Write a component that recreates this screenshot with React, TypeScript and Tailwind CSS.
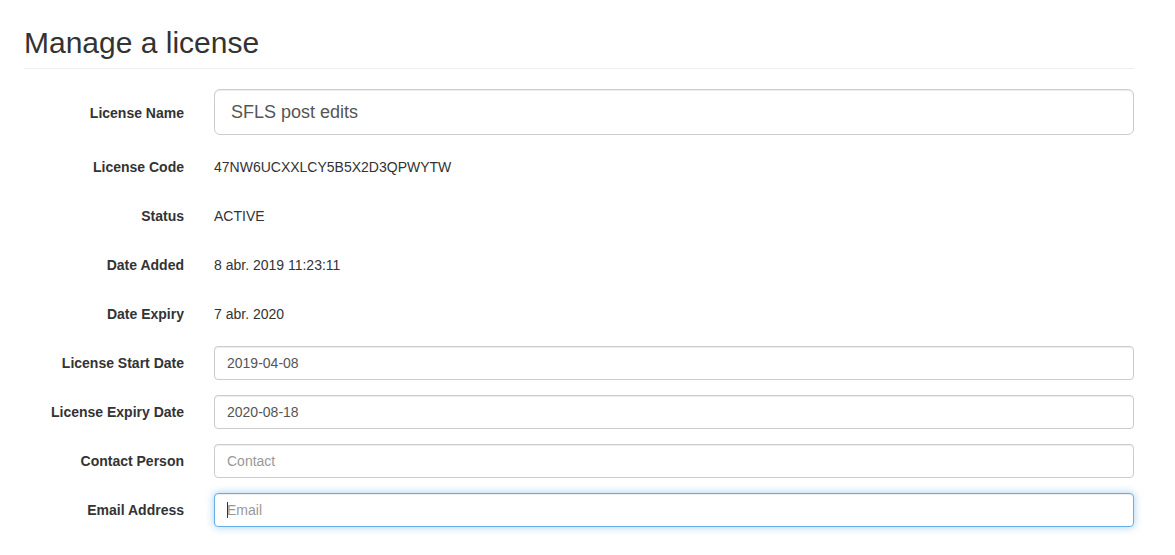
import React from "react";

const font = { fontFamily: '"Liberation Sans", Arial, Helvetica, sans-serif' };

function StaticRow({ label, value }: { label: string; value: string }) {
  return (
    <div className="flex mb-[15px]">
      <label className="w-[160px] shrink-0 text-right font-bold text-[14px] leading-[20px] pt-[7px] text-[#333]">
        {label}
      </label>
      <div className="ml-[30px] flex-1 min-h-[34px] py-[7px] text-[14px] leading-[20px] text-[#333]">
        {value}
      </div>
    </div>
  );
}

function InputRow({
  label,
  value,
  placeholder,
  focused,
}: {
  label: string;
  value?: string;
  placeholder?: string;
  focused?: boolean;
}) {
  return (
    <div className="flex mb-[15px]">
      <label className="w-[160px] shrink-0 text-right font-bold text-[14px] leading-[20px] pt-[7px] text-[#333]">
        {label}
      </label>
      <div className="ml-[30px] flex-1 relative">
        <input
          type="text"
          defaultValue={value}
          placeholder={placeholder}
          className={
            focused
              ? "block w-full h-[34px] px-[12px] py-[6px] text-[14px] leading-[20px] text-[#555] bg-white rounded-[4px] border border-[#66afe9] outline-none shadow-[inset_0_1px_1px_rgba(0,0,0,0.075),0_0_8px_rgba(102,175,233,0.6)] placeholder:text-[#999]"
              : "block w-full h-[34px] px-[12px] py-[6px] text-[14px] leading-[20px] text-[#555] bg-white rounded-[4px] border border-[#ccc] outline-none shadow-[inset_0_1px_1px_rgba(0,0,0,0.075)] placeholder:text-[#999]"
          }
          style={font}
        />
        {focused && (
          <span className="absolute left-[13px] top-[9px] w-px h-[16px] bg-[#333]" />
        )}
      </div>
    </div>
  );
}

export default function App() {
  return (
    <div className="bg-white min-h-[555px] text-[#333]" style={font}>
      <div className="ml-[24px] w-[1110px]">
        <div className="pt-[26px] pb-[9px] border-b border-[#eee] mb-[20px]">
          <h2 className="text-[30px] leading-[33px] font-medium text-[#333]">
            Manage a license
          </h2>
        </div>
        <form>
          <div className="flex mb-[15px]">
            <label className="w-[160px] shrink-0 text-right font-bold text-[14px] leading-[20px] pt-[14px] text-[#333]">
              License Name
            </label>
            <div className="ml-[30px] flex-1">
              <input
                type="text"
                defaultValue="SFLS post edits"
                className="block w-full h-[46px] px-[16px] py-[10px] text-[18px] leading-[24px] text-[#555] bg-white rounded-[6px] border border-[#ccc] outline-none shadow-[inset_0_1px_1px_rgba(0,0,0,0.075)]"
                style={font}
              />
            </div>
          </div>
          <StaticRow label="License Code" value="47NW6UCXXLCY5B5X2D3QPWYTW" />
          <StaticRow label="Status" value="ACTIVE" />
          <StaticRow label="Date Added" value="8 abr. 2019 11:23:11" />
          <StaticRow label="Date Expiry" value="7 abr. 2020" />
          <InputRow label="License Start Date" value="2019-04-08" />
          <InputRow label="License Expiry Date" value="2020-08-18" />
          <InputRow label="Contact Person" placeholder="Contact" />
          <InputRow label="Email Address" placeholder="Email" focused />
        </form>
      </div>
    </div>
  );
}
